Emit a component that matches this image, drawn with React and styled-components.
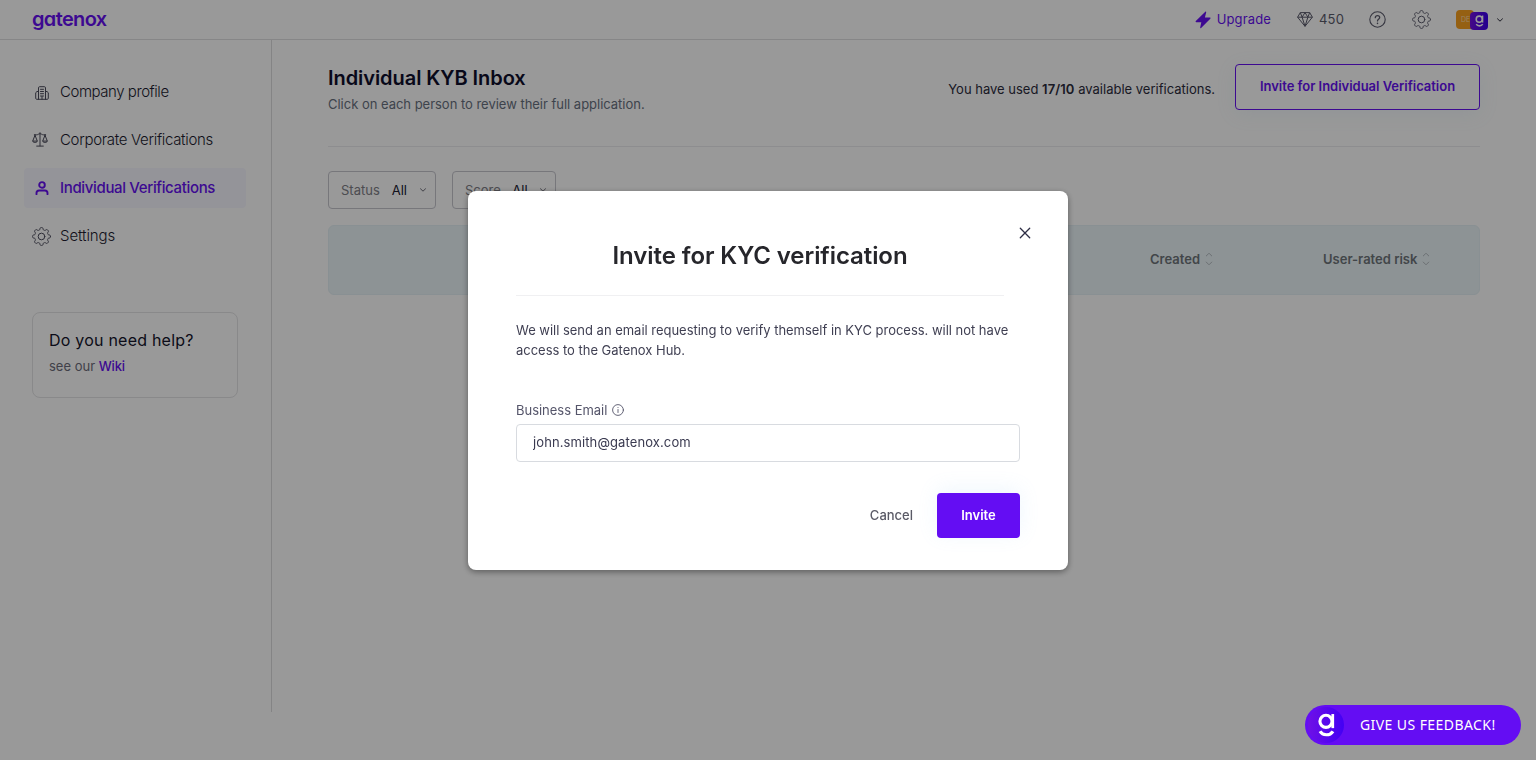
import React from "react";
import styled, { createGlobalStyle, css } from "styled-components";

const GlobalStyle = createGlobalStyle`
  *, *::before, *::after { box-sizing: border-box; }
  html, body { margin: 0; padding: 0; height: 100%; overflow: hidden; }
  body {
    background: #fff;
    color: #2c2c3c;
    font-family: Inter, "Liberation Sans", sans-serif;
    font-size: 13px;
  }
  h1, h2, p { margin: 0; }
  button, input { font: inherit; color: inherit; }
  svg { display: block; flex: none; }
`;

const violet = "#6610f2";

const Page = styled.div`
  display: flex;
  flex-direction: column;
  height: 760px;
`;

const TopBar = styled.header`
  display: flex;
  align-items: center;
  justify-content: space-between;
  height: 40px;
  padding: 0 32px;
  border-bottom: 1px solid #dfdfe2;
`;

const Wordmark = styled.span`
  margin-top: -2px;
  color: ${violet};
  font-size: 20px;
  font-weight: 600;
  line-height: 24px;
  letter-spacing: -0.65px;
  font-feature-settings: "cv11" 1;
`;

const TopActions = styled.div`
  display: flex;
  align-items: center;
  height: 39px;
`;

const TopItem = styled.div`
  display: flex;
  align-items: center;
  gap: ${(p) => p.$gap || 0}px;
  margin-right: ${(p) => p.$after || 0}px;
  color: ${(p) => (p.$accent ? violet : "#5b5b6c")};
  font-size: 13px;
  letter-spacing: 0.15px;
`;

const TopText = styled.span`
  padding-bottom: 1px;
`;

const Avatars = styled.div`
  display: flex;
  width: 32px;
  margin-right: 8px;
`;

const CompanyBadge = styled.span`
  display: flex;
  align-items: center;
  flex: none;
  width: 18px;
  height: 19px;
  padding-left: 5px;
  border-radius: 4px;
  background: #f9a01e;
  color: #ffdca8;
  font-size: 7px;
`;

const MarkBadge = styled.span`
  display: flex;
  align-items: center;
  justify-content: center;
  flex: none;
  width: 18px;
  height: 18px;
  margin: 2px 0 0 -4px;
  border-radius: 4px;
  background: linear-gradient(90deg, #7410e4, #3a00ee);
`;

const Body = styled.div`
  display: flex;
  height: 672px;
`;

const Sidebar = styled.aside`
  display: flex;
  flex-direction: column;
  flex: none;
  width: 272px;
  padding: 32px 25px 0 24px;
  border-right: 1px solid #dcdcde;
`;

const Nav = styled.nav`
  display: flex;
  flex-direction: column;
  gap: 8px;
`;

const NavItem = styled.a`
  display: flex;
  align-items: center;
  gap: 8px;
  height: 40px;
  padding-left: 8px;
  border-radius: 4px;
  font-size: 15px;
  font-weight: 300;
  letter-spacing: ${(p) => p.$spacing}px;
  color: #1c1c30;
  ${(p) =>
    p.$active &&
    css`
      background: #f7f7ff;
      color: ${violet};
      font-weight: 500;
    `}
`;

const NavLabel = styled.span`
  padding-bottom: 2px;
`;

const NavIcon = styled.span`
  display: flex;
  align-items: center;
  justify-content: center;
  width: 20px;
  height: 20px;
  padding: ${(p) => p.$nudge || "0"};
  color: ${(p) => (p.$active ? violet : "#4c4c5c")};
`;

const HelpCard = styled.section`
  display: flex;
  flex-direction: column;
  gap: 6px;
  width: 206px;
  height: 86px;
  margin: 56px 0 0 8px;
  padding: 17px 16px;
  border: 1px solid #e4e4e6;
  border-radius: 8px;
`;

const HelpTitle = styled.h2`
  font-size: 16px;
  line-height: 20px;
  font-weight: 400;
  letter-spacing: 0.22px;
  color: #14142b;
`;

const HelpText = styled.p`
  font-size: 13px;
  line-height: 20px;
  color: #6c6c7a;
`;

const WikiLink = styled.a`
  color: ${violet};
  font-weight: 500;
  letter-spacing: -0.2px;
`;

const Main = styled.main`
  flex: 1;
  padding: 24px 56px 0;
`;

const MainHeader = styled.div`
  display: flex;
  justify-content: space-between;
  height: 83px;
  border-bottom: 1px solid #ececee;
`;

const PageTitle = styled.h1`
  font-size: 20px;
  font-weight: 600;
  line-height: 28px;
  letter-spacing: -0.06px;
  color: #0e0e2c;
`;

const PageNote = styled.p`
  margin-top: 2px;
  font-size: 13px;
  line-height: 20px;
  letter-spacing: -0.02px;
  color: #68717f;
`;

const InviteArea = styled.div`
  display: flex;
  align-items: flex-start;
  gap: 20px;
`;

const Usage = styled.p`
  padding-top: 15px;
  line-height: 20px;

  b {
    font-weight: 600;
    letter-spacing: 0.1px;
  }
`;

const OutlineButton = styled.button`
  width: 245px;
  height: 46px;
  padding: 0 0 2px;
  border: 1px solid ${violet};
  border-radius: 4px;
  background: #fff;
  color: ${violet};
  font-size: 13px;
  font-weight: 600;
  letter-spacing: -0.02px;
  box-shadow: 0 4px 20px rgba(120, 190, 220, 0.1);
`;

const Filters = styled.div`
  display: flex;
  gap: 16px;
  margin-top: 24px;
`;

const Filter = styled.div`
  display: flex;
  align-items: center;
  justify-content: space-between;
  width: ${(p) => p.$width}px;
  height: 38px;
  padding: 0 8px 0 12px;
  border: 1px solid #c6c6ce;
  border-radius: 4px;
  color: #202033;

  svg {
    color: #6c6c78;
  }
`;

const FilterLabel = styled.span`
  color: #808088;
`;

const TableHead = styled.div`
  display: flex;
  align-items: center;
  height: 70px;
  margin-top: 16px;
  padding: 0 0 2px 821px;
  border: 1px solid #e4f0f5;
  border-radius: 6px;
  background: #ebf5f9;
`;

const HeadCell = styled.div`
  display: flex;
  align-items: center;
  gap: 5px;
  width: ${(p) => p.$width}px;
  color: #6f757b;
  font-weight: 600;
`;

const Overlay = styled.div`
  position: fixed;
  inset: 0;
  display: flex;
  align-items: center;
  justify-content: center;
  background: rgba(0, 0, 0, 0.4);
`;

const Modal = styled.div`
  display: flex;
  flex-direction: column;
  width: 600px;
  height: 379px;
  padding: 30px 31px 32px 48px;
  border-radius: 8px;
  background: #fff;
  box-shadow: 0 2px 6px rgba(0, 0, 0, 0.4);
`;

const ModalHeader = styled.div`
  display: flex;
  align-items: flex-start;
  justify-content: space-between;
`;

const ModalTitle = styled.h2`
  width: 488px;
  height: 75px;
  padding-top: 19px;
  border-bottom: 1px solid #f0f0f2;
  text-align: center;
  font-size: 24px;
  font-weight: 600;
  line-height: 32px;
  letter-spacing: -0.08px;
  color: #26262b;
`;

const CloseButton = styled.button`
  display: flex;
  align-items: center;
  justify-content: center;
  width: 24px;
  height: 24px;
  padding: 0;
  border: 0;
  background: none;
  color: #2d2d45;
`;

const ModalText = styled.p`
  margin-top: 24px;
  line-height: 20px;
  letter-spacing: -0.02px;
  color: #3f3f52;
  white-space: nowrap;
`;

const FieldLabel = styled.label`
  display: flex;
  align-items: center;
  gap: 5px;
  margin-top: 40px;
  line-height: 20px;
  letter-spacing: -0.02px;
  color: #55556a;
`;

const TextInput = styled.input`
  width: 504px;
  height: 38px;
  margin-top: 4px;
  padding: 0 15px 1px 16px;
  border: 1px solid #d8dbe0;
  border-radius: 4px;
  outline: none;
  background: #fff;
  color: #3a3a50;
  letter-spacing: 0.1px;
`;

const ModalActions = styled.div`
  display: flex;
  align-items: center;
  justify-content: flex-end;
  gap: 24px;
  width: 504px;
  margin-top: 31px;
`;

const CancelButton = styled.button`
  padding: 0;
  border: 0;
  background: none;
  color: #5a5a66;
  font-weight: 500;
`;

const PrimaryButton = styled.button`
  width: 83px;
  height: 45px;
  padding: 0;
  border: 0;
  border-radius: 4px;
  background: #640df3;
  color: #fff;
  font-weight: 600;
  box-shadow: 0 -4px 20px rgba(120, 190, 240, 0.12);
`;

const FeedbackButton = styled.button`
  position: fixed;
  right: 15px;
  bottom: 15px;
  display: flex;
  align-items: center;
  width: 216px;
  height: 40px;
  padding: 0 0 0 3px;
  border: 0;
  border-radius: 20px;
  background: #640df3;
  color: #fff;
  font-family: "Noto Sans", sans-serif;
  font-size: 14px;
  letter-spacing: 0.42px;
  white-space: nowrap;
`;

const FeedbackText = styled.span`
  padding-bottom: 2px;
`;

const FeedbackMark = styled.span`
  display: flex;
  align-items: center;
  justify-content: center;
  width: 36px;
  height: 36px;
  margin-right: 16px;
  border-radius: 50%;
  background: linear-gradient(90deg, #6f10e6, #4300f4);
`;

function BrandMark({ width, height }) {
  return (
    <svg width={width} height={height} viewBox="0 0 16 23" fill="none" stroke="#fff" strokeWidth="3">
      <circle cx="7.5" cy="8" r="5.8" />
      <path d="M14 1v13.500" strokeWidth="2.6" />
      <path d="M1.8 17.6c2.4 4.4 9.6 4.4 12.4 0" />
    </svg>
  );
}

function Icon({ size = 18, stroke = 1, box = 24, children }) {
  return (
    <svg
      width={size}
      height={size}
      viewBox={`0 0 ${box} ${box}`}
      fill="none"
      stroke="currentColor"
      strokeWidth={stroke}
      strokeLinecap="round"
      strokeLinejoin="round"
    >
      {children}
    </svg>
  );
}

const Bolt = () => (
  <svg width="16" height="18" viewBox="0 0 16 18" fill="currentColor">
    <path d="M10.300.7.8 10.100c-.5.5-.2 1.200.5 1.200h5L5.200 16.500c-.1.7.5.9.9.5l9.200-9.300c.5-.5.2-1.200-.5-1.200H9.900L11.200 1.300c.1-.7-.4-1.100-.9-.6Z" />
  </svg>
);

const Diamond = () => (
  <svg width="16" height="15" viewBox="0 0 16 15" fill="none" stroke="currentColor" strokeLinejoin="round">
    <path d="M3.300.6h9.400l2.700 4.600L8 14.300.6 5.200 3.300.6ZM.6 5.200h14.800M3.300.6l1.800 4.600L8 .6l2.900 4.600L12.700.6M5.100 5.200 8 14.300l2.900-9.100" />
  </svg>
);

const Help = () => (
  <Icon size={17} box={17} stroke={1.1}>
    <circle cx="8.500" cy="8.500" r="7.700" />
    <path d="M6.300 6.700c.1-1.300 1-2 2.200-2s2.200.8 2.200 1.900c0 1.600-2.200 1.700-2.200 3.300" strokeWidth="1.300" />
    <path d="M8.500 12.300v.1" strokeWidth="1.500" />
  </Icon>
);

// Outline of an eight-toothed cog: the radius swings between valley and tooth top.
const cogOutline = Array.from({ length: 160 }, (_, i) => {
  const angle = (i / 160) * Math.PI * 2;
  const wave = Math.tanh(2.2 * Math.cos(8 * angle)) / Math.tanh(2.2);
  const radius = 9.95 + 1.35 * wave;
  return `${(12 + radius * Math.cos(angle)).toFixed(2)},${(12 + radius * Math.sin(angle)).toFixed(2)}`;
}).join(" ");

const Gear = () => (
  <Icon size={19} box={24} stroke={1.25}>
    <circle cx="12" cy="12" r="4.200" />
    <polygon points={cogOutline} />
  </Icon>
);

const Building = () => (
  <Icon size={14} box={14} stroke={1}>
    <path d="M3.500 13.300V1.800c0-.7.400-1.100 1.100-1.100h4.800c.7 0 1.100.4 1.100 1.100v11.500M3.500 5.500H2L.7 6.700v5.600c0 .6.400 1 1 1h10.600c.6 0 1-.4 1-1V6.700L12 5.500h-1.500M5.500 3.300h3M5.500 5.500h3M5.500 7.700h3M5.500 10h3M7 10.500v2.800" />
  </Icon>
);

const Scales = () => (
  <Icon size={16} box={16} stroke={1}>
    <path d="M8 .7v13.100M4.700 14.100h6.600M2.300 2.800h2.200c1.700 0 2-1.100 3.500-1.100s1.800 1.100 3.500 1.100h2.200M3 3.200.7 9.100h4.600L3 3.200ZM13 3.200l-2.300 5.900h4.600L13 3.200ZM.7 9.300c.5 1.700 4.100 1.700 4.600 0M10.700 9.300c.5 1.700 4.100 1.700 4.600 0" />
  </Icon>
);

const Person = () => (
  <Icon size={14} box={14} stroke={1.9}>
    <circle cx="7" cy="3.900" r="2.800" />
    <path d="M1.500 13.200v-1.100c0-1.600 1-2.600 2.600-2.600h5.800c1.600 0 2.600 1 2.600 2.600v1.100" />
  </Icon>
);

const Chevron = () => (
  <Icon size={8} box={8} stroke={1}>
    <path d="m1.500 2.800 2.500 2.400 2.500-2.400" />
  </Icon>
);

const Sorter = () => (
  <svg width="8" height="14" viewBox="0 0 8 14" fill="none" stroke="#b3babf" strokeWidth="1">
    <path d="M1 4.200 4 1.200l3 3M1 9.800l3 3 3-3" />
  </svg>
);

const Close = () => (
  <Icon size={12} box={12} stroke={1.3}>
    <path d="m1.300 1.300 9.400 9.400M10.700 1.300l-9.400 9.400" />
  </Icon>
);

const Info = () => (
  <Icon size={12} box={12} stroke={0.9}>
    <circle cx="6" cy="6" r="5.400" />
    <path d="M6 5.500v3M6 3.500v.1" />
  </Icon>
);

const navItems = [
  { label: "Company profile", icon: <Building />, spacing: -0.45, nudge: "2px 0 0" },
  { label: "Corporate Verifications", icon: <Scales />, spacing: -0.31, nudge: "0 4px 1px 0" },
  { label: "Individual Verifications", icon: <Person />, spacing: -0.35, active: true },
  { label: "Settings", icon: <Gear />, spacing: -0.1, nudge: "1px 1px 0 0" },
];

export default function App() {
  return (
    <>
      <GlobalStyle />
      <Page>
        <TopBar>
          <Wordmark>gatenox</Wordmark>
          <TopActions>
            <TopItem $accent $gap={6} $after={26}>
              <Bolt />
              <TopText>Upgrade</TopText>
            </TopItem>
            <TopItem $gap={6} $after={25}>
              <Diamond />
              <TopText>450</TopText>
            </TopItem>
            <TopItem $after={26}>
              <Help />
            </TopItem>
            <TopItem $after={25}>
              <Gear />
            </TopItem>
            <Avatars>
              <CompanyBadge>DE</CompanyBadge>
              <MarkBadge>
                <BrandMark width={9} height={12} />
              </MarkBadge>
            </Avatars>
            <Chevron />
          </TopActions>
        </TopBar>
        <Body>
          <Sidebar>
            <Nav>
              {navItems.map((item) => (
                <NavItem key={item.label} $active={item.active} $spacing={item.spacing}>
                  <NavIcon $nudge={item.nudge} $active={item.active}>
                    {item.icon}
                  </NavIcon>
                  <NavLabel>{item.label}</NavLabel>
                </NavItem>
              ))}
            </Nav>
            <HelpCard>
              <HelpTitle>Do you need help?</HelpTitle>
              <HelpText>
                see our <WikiLink>Wiki</WikiLink>
              </HelpText>
            </HelpCard>
          </Sidebar>
          <Main>
            <MainHeader>
              <div>
                <PageTitle>Individual KYB Inbox</PageTitle>
                <PageNote>Click on each person to review their full application.</PageNote>
              </div>
              <InviteArea>
                <Usage>
                  You have used <b>17/10</b> available verifications.
                </Usage>
                <OutlineButton>Invite for Individual Verification</OutlineButton>
              </InviteArea>
            </MainHeader>
            <Filters>
              <Filter $width={108}>
                <FilterLabel>Status</FilterLabel>
                All
                <Chevron />
              </Filter>
              <Filter $width={104}>
                <FilterLabel>Score</FilterLabel>
                All
                <Chevron />
              </Filter>
            </Filters>
            <TableHead>
              <HeadCell $width={173}>
                Created
                <Sorter />
              </HeadCell>
              <HeadCell $width={140}>
                User-rated risk
                <Sorter />
              </HeadCell>
            </TableHead>
          </Main>
        </Body>
      </Page>
      <Overlay>
        <Modal role="dialog">
          <ModalHeader>
            <ModalTitle>Invite for KYC verification</ModalTitle>
            <CloseButton aria-label="Close">
              <Close />
            </CloseButton>
          </ModalHeader>
          <ModalText>
            We will send an email requesting to verify themself in KYC process. will not have
            <br />
            access to the Gatenox Hub.
          </ModalText>
          <FieldLabel>
            Business Email
            <Info />
          </FieldLabel>
          <TextInput defaultValue="john.smith@gatenox.com" />
          <ModalActions>
            <CancelButton>Cancel</CancelButton>
            <PrimaryButton>Invite</PrimaryButton>
          </ModalActions>
        </Modal>
      </Overlay>
      <FeedbackButton>
        <FeedbackMark>
          <BrandMark width={17} height={24} />
        </FeedbackMark>
        <FeedbackText>GIVE US FEEDBACK!</FeedbackText>
      </FeedbackButton>
    </>
  );
}
